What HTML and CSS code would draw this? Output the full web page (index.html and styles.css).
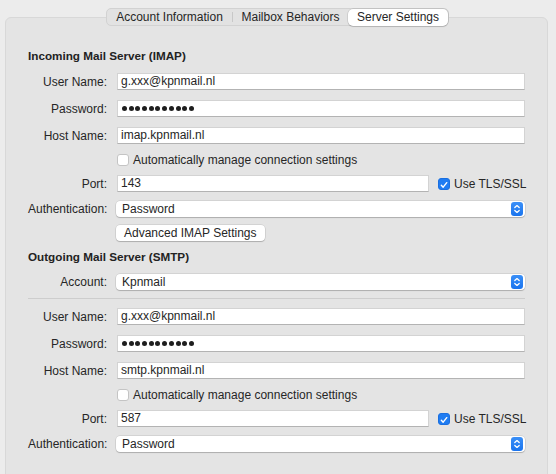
FILE: index.html
```html
<!DOCTYPE html>
<html>
<head>
<meta charset="utf-8">
<link rel="stylesheet" href="styles.css">
</head>
<body>
<div class="window">
  <div class="tabs">
    <div class="tab t1">Account Information</div>
    <div class="tab-sep"></div>
    <div class="tab t2">Mailbox Behaviors</div>
    <div class="tab t3 selected">Server Settings</div>
  </div>
  <div class="panel">
    <div class="heading">Incoming Mail Server (IMAP)</div>
    <div class="row"><span class="label">User Name:</span><div class="field">g.xxx@kpnmail.nl</div></div>
    <div class="row"><span class="label">Password:</span><div class="field"><span class="dots"><i></i><i></i><i></i><i></i><i></i><i></i><i></i><i></i><i></i><i></i><i></i></span></div></div>
    <div class="row"><span class="label">Host Name:</span><div class="field">imap.kpnmail.nl</div></div>
    <div class="row row-check"><span class="label"></span><span class="check"></span><span class="check-text">Automatically manage connection settings</span></div>
    <div class="row"><span class="label">Port:</span><div class="field port">143</div><span class="check on"><svg viewBox="0 0 12 12" width="12" height="12"><path d="M2.8 6.3 L5 8.6 L9.3 3.2" fill="none" stroke="#fff" stroke-width="1.7" stroke-linecap="round" stroke-linejoin="round"/></svg></span><span class="check-text">Use TLS/SSL</span></div>
    <div class="row row-pop"><span class="label">Authentication:</span><div class="popup"><span>Password</span><span class="arrows"><svg viewBox="0 0 12 14" width="12" height="14"><path d="M3.8 5.6 L6 3.6 L8.2 5.6 M3.8 8.4 L6 10.4 L8.2 8.4" fill="none" stroke="#fff" stroke-width="1.3" stroke-linecap="round" stroke-linejoin="round"/></svg></span></div></div>
    <div class="row row-btn"><span class="label"></span><div class="button">Advanced IMAP Settings</div></div>
    <div class="heading h2">Outgoing Mail Server (SMTP)</div>
    <div class="row row-pop row-acct"><span class="label">Account:</span><div class="popup"><span>Kpnmail</span><span class="arrows"><svg viewBox="0 0 12 14" width="12" height="14"><path d="M3.8 5.6 L6 3.6 L8.2 5.6 M3.8 8.4 L6 10.4 L8.2 8.4" fill="none" stroke="#fff" stroke-width="1.3" stroke-linecap="round" stroke-linejoin="round"/></svg></span></div></div>
    <div class="sep"></div>
    <div class="row row-first"><span class="label">User Name:</span><div class="field">g.xxx@kpnmail.nl</div></div>
    <div class="row"><span class="label">Password:</span><div class="field"><span class="dots"><i></i><i></i><i></i><i></i><i></i><i></i><i></i><i></i><i></i><i></i><i></i></span></div></div>
    <div class="row"><span class="label">Host Name:</span><div class="field">smtp.kpnmail.nl</div></div>
    <div class="row row-check"><span class="label"></span><span class="check"></span><span class="check-text">Automatically manage connection settings</span></div>
    <div class="row"><span class="label">Port:</span><div class="field port">587</div><span class="check on"><svg viewBox="0 0 12 12" width="12" height="12"><path d="M2.8 6.3 L5 8.6 L9.3 3.2" fill="none" stroke="#fff" stroke-width="1.7" stroke-linecap="round" stroke-linejoin="round"/></svg></span><span class="check-text">Use TLS/SSL</span></div>
    <div class="row row-pop"><span class="label">Authentication:</span><div class="popup"><span>Password</span><span class="arrows"><svg viewBox="0 0 12 14" width="12" height="14"><path d="M3.8 5.6 L6 3.6 L8.2 5.6 M3.8 8.4 L6 10.4 L8.2 8.4" fill="none" stroke="#fff" stroke-width="1.3" stroke-linecap="round" stroke-linejoin="round"/></svg></span></div></div>
  </div>
</div>
</body>
</html>
```

FILE: styles.css
```css
html, body {
  margin: 0;
  padding: 0;
  background: #ececec;
  font-family: "Liberation Sans", Arial, sans-serif;
  font-size: 12px;
  color: #262626;
  height: 474px;
  overflow: hidden;
}

.window {
  padding-top: 8px;
}

.tabs {
  position: relative;
  z-index: 2;
  display: flex;
  align-items: center;
  margin-left: 106px;
  width: 343px;
  height: 18px;
  box-sizing: border-box;
  background: #e2e2e2;
  border: 1px solid #d2d2d2;
  border-radius: 5px;
}

.tab {
  height: 16px;
  line-height: 16px;
  text-align: center;
  box-sizing: border-box;
  color: #262626;
}

.t1 { width: 125px; }
.t2 { width: 115px; }
.t3 { width: 100px; }

.tab-sep {
  width: 1px;
  height: 10px;
  background: #c8c8c8;
}

.tab.selected {
  height: 17px;
  line-height: 17px;
  background: #fff;
  border-radius: 5px;
  box-shadow: 0 0 0 0.5px rgba(0,0,0,0.15), 0 1px 1px rgba(0,0,0,0.15);
  margin-top: 1px;
  margin-right: -1px;
}

.panel {
  margin: -9px 8px 0 5px;
  height: 480px;
  box-sizing: border-box;
  background: #e4e4e4;
  border: 1px solid #d8d8d8;
  border-radius: 6px;
  padding: 30px 22px 0 22px;
}

.heading {
  font-weight: bold;
  font-size: 11.7px;
  height: 16px;
  line-height: 16px;
  color: #222;
}

.heading.h2 {
  margin-top: 8px;
}

.row {
  display: flex;
  align-items: center;
  height: 17px;
  margin-top: 10px;
}

.heading + .row {
  margin-top: 9px;
}

.label {
  width: 79px;
  flex: none;
  text-align: right;
  margin-right: 10px;
  white-space: nowrap;
}

.field {
  flex: 1;
  height: 17px;
  box-sizing: border-box;
  background: #fff;
  border: 1px solid #d3d3d3;
  border-bottom-color: #b3b3b3;
  padding-left: 3px;
  line-height: 15px;
  display: flex;
  align-items: center;
}

.field.port {
  flex: none;
  width: 312px;
}

.dots {
  display: flex;
  gap: 1.7px;
  padding-left: 1px;
}

.dots i {
  display: block;
  width: 5px;
  height: 5px;
  border-radius: 50%;
  background: #1e1e1e;
}

.row-check {
  height: 11px;
}

.check {
  flex: none;
  width: 12px;
  height: 12px;
  box-sizing: border-box;
  background: #fff;
  border: 1px solid #c4c4c4;
  border-radius: 3px;
  display: flex;
}

.field.port + .check {
  margin-left: 9px;
}

.check.on {
  background: #1f7cf2;
  border-color: #1a6fe0;
}

.check-text {
  margin-left: 4px;
  white-space: nowrap;
}

.row-pop {
  height: 16px;
  margin-top: 9px;
}

.row-acct {
  margin-top: 7px;
}

.popup {
  flex: 1;
  height: 16px;
  margin-left: -1px;
  background: #fff;
  border-radius: 4px;
  box-shadow: 0 0 0 0.5px rgba(0,0,0,0.14), 0 1px 1px rgba(0,0,0,0.18);
  display: flex;
  align-items: center;
  justify-content: space-between;
  padding-left: 6px;
  padding-right: 2px;
}

.arrows {
  width: 12px;
  height: 14px;
  border-radius: 3px;
  background: linear-gradient(#3a8ff7, #1a74ee);
  display: flex;
}

.row-btn {
  height: 16px;
  margin-top: 8px;
}

.button {
  height: 16px;
  margin-left: -1px;
  background: #fff;
  border-radius: 4px;
  box-shadow: 0 0 0 0.5px rgba(0,0,0,0.14), 0 1px 1px rgba(0,0,0,0.18);
  padding: 0 8px;
  line-height: 16px;
  white-space: nowrap;
}

.sep {
  height: 1px;
  background: #cdcdcd;
  margin-top: 8px;
}

.sep + .row {
  margin-top: 9px;
}
```
